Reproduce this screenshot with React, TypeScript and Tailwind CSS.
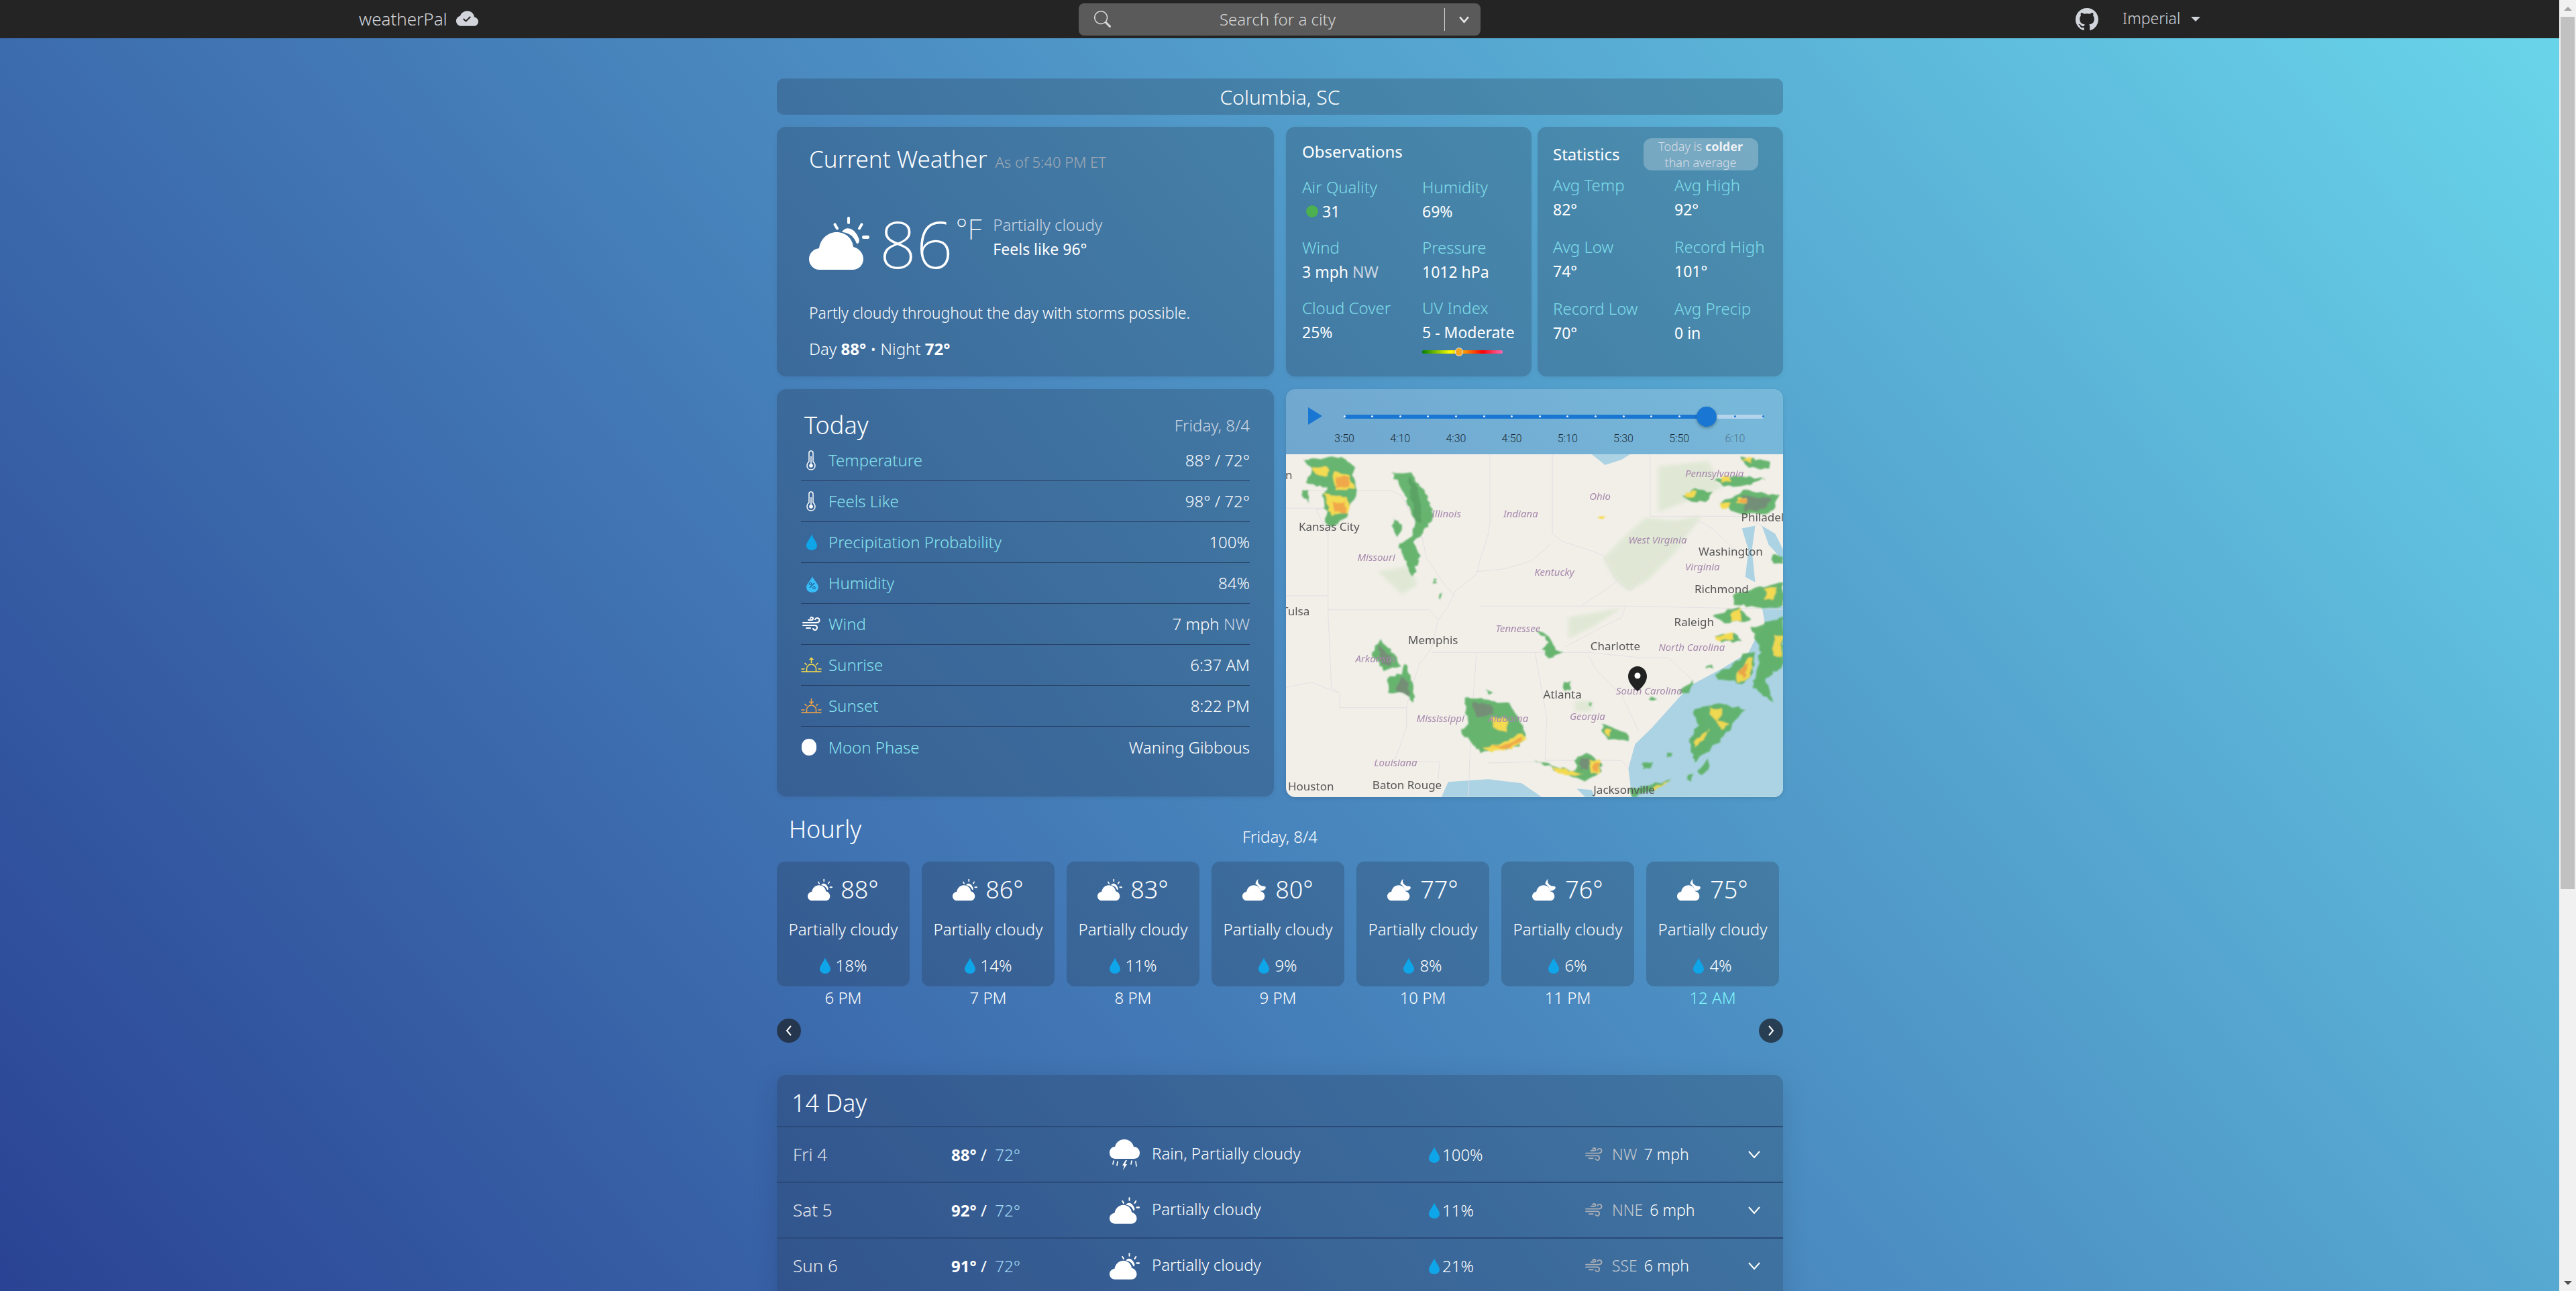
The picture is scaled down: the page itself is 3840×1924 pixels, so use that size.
import React from "react";
import { BsCloudCheckFill, BsGithub, BsSearch } from "react-icons/bs";

const CloudSun = ({ className }: { className?: string }) => (
  <svg viewBox="0 0 90 79" className={className} fill="#fff">
    <path d="M16 79C6 79 0 71 0 63C0 55 6 48 15 47C17 33 28 23 41 23C55 23 65 33 66 45C75 47 81 55 81 63C81 72 74 79 65 79Z" />
    <path d="M49 23C54 13 68 16 74 32C76 37 74 41 71 40C67 29 60 24 49 23Z" />
    <rect x="57" y="0" width="4" height="11" rx="2" />
    <rect x="38" y="9" width="4" height="11" rx="2" transform="rotate(-30 40 14)" />
    <rect x="75" y="9" width="4" height="11" rx="2" transform="rotate(30 77 14)" />
    <rect x="79" y="28" width="11" height="5" rx="2.5" />
  </svg>
);
const CloudMoon = ({ className }: { className?: string }) => (
  <svg viewBox="0 0 90 79" className={className} fill="#fff">
    <path d="M16 79C6 79 0 71 0 63C0 55 6 48 15 47C17 33 28 23 41 23C55 23 65 33 66 45C75 47 81 55 81 63C81 72 74 79 65 79Z" />
    <path d="M58 0C52 12 60 26 80 27C84 27 86 32 84 35C78 42 72 44 66 43C62 30 54 22 47 19C49 11 52 4 58 0Z" />
  </svg>
);
const CloudStorm = ({ className }: { className?: string }) => (
  <svg viewBox="0 0 45 46" className={className} fill="#fff">
    <path d="M9 29C3 29 0 25 0 20C0 15 3 11 8 11C10 4 15 0 22 0C29 0 34 4 36 11C41 11 45 15 45 20C45 25 42 29 36 29Z" />
    <path d="M24 31L19 39H22L20 46L26 37H23L26 31Z" />
    <path d="M6 32L5 37M12 33L11 39M33 32L32 37M39 33L40 40" stroke="#fff" strokeWidth="1.6" strokeLinecap="round" />
  </svg>
);
const Drop = ({ className }: { className?: string }) => (
  <svg viewBox="0 0 16 24" className={className} fill="#0ea5e9">
    <path d="M8 0C9 5 16 12 16 17C16 21 12.500 24 8 24C3.500 24 0 21 0 17C0 12 7 5 8 0Z" />
  </svg>
);
const Wind = ({ className, color }: { className?: string; color: string }) => (
  <svg viewBox="0 0 27 22" className={className} fill="none" stroke={color} strokeWidth="2" strokeLinecap="round">
    <path d="M1 9H20C24 9 25.500 7 25.500 5.500C25.500 3.500 24 2 22 2C20.500 2 19.500 3 19 4" />
    <path d="M1 13H19C21.500 13 22 15 22 16.500C22 18.500 20.500 20 19 20C17.500 20 16.500 19 16 18" />
    <path d="M9 5H14C15.500 5 16 4 16 3C16 2 15 1 14 1C13 1 12 1.500 12 2.500" />
    <path d="M6 17H12" />
  </svg>
);
const Thermo = () => (
  <svg viewBox="0 0 14 30" className="w-[14px] h-[30px] ml-[8px]" fill="none" stroke="#fff" strokeWidth="1.500">
    <path d="M4 17V4C4 2 5.500 1 7 1C8.500 1 10 2 10 4V17C12 18.500 13 20 13 23C13 26.500 10.500 29 7 29C3.500 29 1 26.500 1 23C1 20 2 18.500 4 17Z" />
    <circle cx="7" cy="23" r="2.800" fill="#fff" stroke="none" />
    <path d="M7 9V22" />
  </svg>
);
const Humid = () => (
  <svg viewBox="0 0 18 24" className="w-[18px] h-[24px] ml-[8px] mt-[4px]">
    <path d="M9 0C10 4 18 11 18 16C18 21 14 24 9 24C4 24 0 21 0 16C0 11 8 4 9 0Z" fill="#38bdf8" />
    <path d="M5 17L12 10" stroke="#1e5a8f" strokeWidth="1.200" />
    <circle cx="6" cy="11" r="1.800" fill="none" stroke="#1e5a8f" strokeWidth="1" />
    <circle cx="11.500" cy="17" r="1.800" fill="none" stroke="#1e5a8f" strokeWidth="1" />
  </svg>
);
const Sun = ({ color, down }: { color: string; down?: boolean }) => (
  <svg viewBox="0 0 30 22" className="w-[31px] h-[22px]" fill="none" stroke={color} strokeWidth="1.500">
    <path d="M0 21H30M0 17H5M25 17H30" />
    <path d="M8 17C8 13 11 10 15 10C19 10 22 13 22 17V21M8 17V21" />
    <path d="M5 8L8 11M25 8L22 11" />
    {down ? <path d="M15 0V7M12 4.500L15 7.500L18 4.500" /> : <path d="M15 8V1M12 3.500L15 0.500L18 3.500" />}
  </svg>
);

const hours = [
  ["88°", "18%", "6 PM", 0],
  ["86°", "14%", "7 PM", 0],
  ["83°", "11%", "8 PM", 0],
  ["80°", "9%", "9 PM", 1],
  ["77°", "8%", "10 PM", 1],
  ["76°", "6%", "11 PM", 1],
  ["75°", "4%", "12 AM", 1],
] as const;

const days = [
  ["Fri 4", "88°", "72°", "Rain, Partially cloudy", "100%", "NW", "7 mph", true],
  ["Sat 5", "92°", "72°", "Partially cloudy", "11%", "NNE", "6 mph", false],
  ["Sun 6", "91°", "72°", "Partially cloudy", "21%", "SSE", "6 mph", false],
] as const;

const todayRows: [React.ReactNode, string, React.ReactNode][] = [
  [<Thermo />, "Temperature", "88° / 72°"],
  [<Thermo />, "Feels Like", "98° / 72°"],
  [<Drop className="w-[16px] h-[24px] ml-[8px]" />, "Precipitation Probability", "100%"],
  [<Humid />, "Humidity", "84%"],
  [<Wind className="w-[27px] h-[22px] ml-[2px]" color="#fff" />, "Wind", <>7 mph <span className="text-[#cbd5e1]">NW</span></>],
  [<Sun color="#fde047" />, "Sunrise", "6:37 AM"],
  [<Sun color="#f5a742" down />, "Sunset", "8:22 PM"],
  [<span className="block w-[22px] h-[25px] ml-px rounded-full bg-white" />, "Moon Phase", "Waning Gibbous"],
];

const Stat = ({ label, children, className }: { label: string; children: React.ReactNode; className?: string }) => (
  <div className={className}>
    <div className="text-[#7fdde9] text-[24px] font-light leading-[30px]">{label}</div>
    <div className="text-white text-[23px] leading-[30px] mt-[6px] whitespace-nowrap">{children}</div>
  </div>
);

function pts(p: number[]) {
  let s = "";
  const n = p.length / 2;
  for (let i = 0; i < n; i++) {
    const x0 = p[i * 2], y0 = p[i * 2 + 1];
    const x1 = p[((i + 1) % n) * 2], y1 = p[((i + 1) % n) * 2 + 1];
    const steps = Math.max(2, Math.round(Math.hypot(x1 - x0, y1 - y0) / 12));
    for (let k = 0; k < steps; k++) {
      const t = k / steps;
      const seed = Math.sin((x0 + k * 13.7) * 12.9898 + (y0 + k * 7.1) * 78.233) * 43758.5453;
      const r = seed - Math.floor(seed);
      const seed2 = Math.sin((x0 + k * 5.3) * 39.346 + (y0 + k * 11.9) * 11.135) * 24634.6345;
      const r2 = seed2 - Math.floor(seed2);
      s += `${(x0 + (x1 - x0) * t + (r - 0.5) * 10).toFixed(1)},${(y0 + (y1 - y0) * t + (r2 - 0.5) * 10).toFixed(1)} `;
    }
  }
  return s;
}

const greens: number[][] = [
  [85,285,150,280,200,275,240,310,232,345,250,405,225,450,215,500,170,535,150,520,155,480,140,420,160,390,95,375,110,320],
  [85,395,100,395,100,445,85,425],
  [350,330,405,335,450,400,478,490,440,560,420,590,435,640,415,720,400,690,385,640,372,600,410,570,420,520,390,420],
  [355,495,380,530,370,570,355,540],
  [315,955,360,1010,375,1050,330,1065,290,1010],
  [390,1040,410,1100,420,1185,380,1150,345,1150,338,1095,380,1080],
  [780,915,815,935,845,990,862,1000,820,1020,800,985,825,960],
  [570,1165,650,1180,705,1190,730,1250,757,1310,730,1350,620,1370,590,1340,555,1290,580,1260,570,1200],
  [630,1130,650,1150,640,1160],
  [780,1400,830,1420,900,1440,905,1385,950,1375,980,1420,975,1450,930,1475,850,1440],
  [985,1265,1020,1280,1062,1310,1060,1325,1000,1320,980,1295],
  [940,1185,950,1185,950,1200],
  [1370,790,1440,760,1524,740,1524,830,1440,832,1380,820],
  [1310,862,1390,830,1432,880,1350,892],
  [1320,940,1380,925,1400,960,1340,962],
  [1430,910,1524,870,1524,1050,1470,1100,1490,1180,1430,1130,1455,1000],
  [1320,1080,1360,1060,1410,1000,1440,1000,1432,1080,1400,1120,1370,1100,1330,1105],
  [1250,1220,1320,1190,1410,1210,1360,1290,1340,1320,1260,1410,1240,1330,1270,1270],
  [1265,1450,1300,1395,1300,1430,1285,1455],
  [1060,1510,1190,1470,1130,1515,1070,1536],
  [1100,1415,1135,1405,1130,1430,1105,1435],
  [1395,275,1480,290,1480,322,1420,312],
  [1320,362,1380,345,1470,355,1400,385,1340,382],
  [1225,420,1260,395,1312,405,1290,440,1240,442],
  [1330,450,1410,395,1512,420,1490,480,1400,490],
  [1490,640,1524,640,1524,675,1495,670],
  [865,1110,885,1110,885,1140,865,1140],
  [475,728,483,728,483,745,475,745],
  [490,783,500,783,500,805,490,805],
  [1215,1135,1255,1105,1240,1150,1215,1155],
  [1295,1045,1312,1045,1312,1058,1295,1058],
  [1240,1450,1255,1450,1250,1475,1240,1475],
  [1175,1370,1190,1370,1190,1385,1175,1385],
  [1120,1160,1145,1170,1125,1180],
];
const yellows: number[][] = [
  [175,325,225,345,238,390,180,402],
  [148,412,220,422,222,482,170,495],
  [115,310,160,310,160,345,125,340],
  [650,1240,700,1245,692,1292,660,1285],
  [620,1352,680,1340,740,1300,752,1320,720,1352,650,1368],
  [820,1420,905,1445,930,1450,900,1460,840,1440],
  [945,1400,975,1400,975,1448,945,1445],
  [990,1285,1010,1290,1005,1312,988,1305],
  [1300,1205,1345,1210,1330,1250,1360,1265,1340,1290,1310,1240],
  [1260,1330,1305,1280,1290,1320,1260,1350],
  [1380,1090,1420,1020,1435,1020,1420,1100,1390,1112],
  [1370,845,1398,835,1395,880,1365,885],
  [1495,940,1520,935,1520,1015,1495,1010],
  [1470,760,1505,755,1495,810,1470,800],
  [1320,945,1370,930,1375,950,1335,955],
  [1400,290,1430,275,1430,295],
  [1232,405,1262,402,1255,428,1232,425],
  [1340,345,1362,345,1365,370,1340,368],
  [1385,430,1415,425,1415,448,1385,445],
  [1335,448,1362,448,1360,465,1340,465],
  [1130,1505,1190,1472,1140,1510],
  [970,495,995,495,985,507],
];
const oranges: number[][] = [
  [180,345,220,350,225,385,185,390],
  [175,440,215,445,210,480,180,480],
  [640,1352,700,1340,745,1310,735,1335,690,1358],
  [955,1410,972,1410,970,1440,955,1440],
  [1390,1070,1420,1040,1410,1095],
  [1390,432,1412,430,1412,445,1392,445],
];

const lines = [
  "M645 265V520L640 560L615 660L605 710L540 775L520 830L490 880L470 985L435 1040L410 1130L395 1205V1280L360 1400",
  "M832 265V560L865 590L930 615L985 640L1025 735L990 770L920 825",
  "M1125 265V495H1400L1460 530",
  "M160 465V850L170 1130L195 1150V1205H395",
  "M34 465H160L125 470L160 560M100 400H350L380 420L440 560L455 650L510 750L540 790",
  "M34 790H158M158 842H465L490 880M615 828H1050L1524 840",
  "M605 700L690 690L770 660L830 595",
  "M470 1000H780H940L1100 1020H1180L1250 1100",
  "M605 1000L590 1250L580 1536M780 1000L815 1240L810 1400H1040L1060 1430",
  "M940 1010L960 1060L1040 1160L1090 1290",
  "M1050 830L1040 870L960 920L870 980M1030 740L1070 770L1110 690L1180 620L1270 510L1310 540L1380 620",
  "M295 1405H495L490 1470M34 1130L110 1110L190 1150M640 1410L810 1405",
];

const label = (zx: number, zy: number) => ({ x: (zx - 34) / 2.01, y: (zy - 265) / 2.489 });
const mapLabels: [string, number, number, boolean][] = [
  ["Kansas City", 72, 548, false], ["Philadelphia", 1398, 515, false], ["Washington", 1270, 640, false],
  ["Richmond", 1258, 780, false], ["Raleigh", 1197, 903, false], ["Memphis", 400, 970, false],
  ["Charlotte", 946, 993, false], ["Atlanta", 805, 1172, false], ["Houston", 40, 1512, false],
  ["Baton Rouge", 293, 1507, false], ["Jacksonville", 955, 1525, false], ["Tulsa", 22, 863, false],
  ["Lincoln", -62, 358, false], ["Dallas", -80, 1212, false],
  ["Pennsylvania", 1230, 350, true], ["Ohio", 943, 435, true], ["Illinois", 470, 500, true],
  ["Indiana", 685, 500, true], ["West Virginia", 1060, 595, true], ["Missouri", 248, 660, true],
  ["Virginia", 1230, 695, true], ["Kentucky", 778, 715, true], ["Tennessee", 662, 925, true],
  ["North Carolina", 1150, 995, true], ["Arkansas", 242, 1036, true], ["South Carolina", 1023, 1155, true],
  ["Georgia", 884, 1250, true], ["Mississippi", 425, 1258, true], ["Alabama", 640, 1258, true],
  ["Louisiana", 298, 1423, true], ["Oklahoma", -110, 980, true],
];

const RadarMap = () => (
  <svg viewBox="0 0 741 511" className="block w-[741px] h-[511px] bg-[#f2efe9]">
    <defs>
      <filter id="soft"><feGaussianBlur stdDeviation="2.200" /></filter>
      <filter id="softer"><feGaussianBlur stdDeviation="6" /></filter>
      <filter id="txt"><feGaussianBlur stdDeviation="0.35" /></filter>
    </defs>
    <g transform="scale(0.49751 0.40177) translate(-34 -265)">
      <g fill="#e0e8d5" filter="url(#softer)">
        <path d="M985 650L1040 580L1110 500L1200 510L1280 490L1200 630L1120 730L1060 775L1020 730Z" />
        <path d="M1150 310L1300 290L1340 390L1150 480Z" />
        <path d="M310 700L400 680L430 750L380 785Z" />
        <path d="M880 870L1040 835L960 900L880 950Z" />
        <path d="M900 1180H950V1220H900Z" />
      </g>
      <g fill="#acd3e3">
        <path d="M1524 830L1460 830L1470 900L1440 950L1420 1000L1340 1060L1250 1120L1210 1170L1130 1280L1080 1340L1060 1430L1070 1536H1524Z" />
        <path d="M500 1536L520 1480L640 1470L740 1485L800 1536Z" />
        <path d="M930 1536L905 1505L950 1510L960 1536Z" />
        <path d="M950 265H1065L1040 285L990 305Z" />
        <path d="M1400 540L1440 530L1430 620L1440 740L1410 720L1420 620Z" />
        <path d="M1460 530L1500 560L1524 620V660L1480 600Z" />
      </g>
      <g fill="none" stroke="#e3dce2" strokeWidth="2">
        {lines.map((d, i) => <path key={i} d={d} />)}
      </g>
      <g filter="url(#soft)" opacity="0.92">
        {greens.map((p, i) => <polygon key={i} points={pts(p)} fill="#5bb065" />)}
        <polygon points={pts([310,975,345,1015,350,1050,320,1045])} fill="#6b876d" />
        <polygon points={pts([375,1090,400,1110,405,1160,365,1140])} fill="#6b876d" />
        <polygon points={pts([590,1185,650,1195,660,1230,610,1240])} fill="#6b876d" />
        <polygon points={pts([1400,420,1490,430,1470,470,1410,475])} fill="#6b876d" />
        <polygon points={pts([915,1390,945,1395,945,1430,915,1435])} fill="#6b876d" />
        <polygon points={pts([400,345,430,390,445,520,420,510])} fill="#4f9c5a" />
        {yellows.map((p, i) => <polygon key={i} points={pts(p)} fill="#f4d945" />)}
        {oranges.map((p, i) => <polygon key={i} points={pts(p)} fill="#f0a23c" />)}
      </g>
    </g>
    <g fontFamily="'Noto Sans', sans-serif" filter="url(#txt)">
      {mapLabels.map(([t, zx, zy, it]) => {
        const l = label(zx, zy);
        return (
          <text key={t} x={l.x} y={l.y} fill={it ? "#a688ac" : "#555"} fontStyle={it ? "italic" : "normal"} fontSize={it ? 15 : 17}>{t}</text>
        );
      })}
    </g>
    <path d="M524 316C516 316 510 323 510 331C510 343 524 353 524 353C524 353 538 343 538 331C538 323 532 316 524 316Z" fill="#222" />
    <circle cx="524" cy="330" r="4.500" fill="#fff" />
  </svg>
);

const card = "rounded-[14px] bg-[#1f2a40]/25 shadow-[0_2px_6px_rgba(0,0,0,0.06)]";

export default function App() {
  const ticks = Array.from({ length: 16 }, (_, i) => i);
  const slots = ["3:50", "4:10", "4:30", "4:50", "5:10", "5:30", "5:50", "6:10"];
  return (
    <div className="flex h-[1924px] w-full overflow-hidden font-['Noto_Sans',sans-serif] text-white">
      <div className="flex-1 min-w-0 bg-[linear-gradient(50deg,#2a4394,#4a8ac0_50%,#69d6eb)]">
        <header className="h-[57px] bg-[#242424] relative flex items-center justify-center">
          <div className="absolute left-[535px] top-0 h-[57px] flex items-center gap-[13px] text-[#d1d5db]">
            <span className="text-[26px] font-light">weatherPal</span>
            <BsCloudCheckFill className="w-[33px] h-[33px]" />
          </div>
          <div className="w-[599px] h-[48px] rounded-[8px] bg-[#5a5a5a] flex items-center pl-[23px] pr-[16px] text-[#d6d6d6]">
            <BsSearch className="w-[25px] h-[25px]" />
            <span className="flex-1 text-center text-[24px] font-light">Search for a city</span>
            <span className="w-px h-[34px] bg-[#d6d6d6] mr-[20px]" />
            <svg viewBox="0 0 16 16" className="w-[17px] h-[17px]" fill="none" stroke="#e5e5e5" strokeWidth="2.500"><path d="M2 5L8 12L14 5" /></svg>
          </div>
          <div className="absolute left-[3094px] top-0 h-[57px] flex items-center text-[#d1d5db]">
            <BsGithub className="w-[34px] h-[34px]" />
            <span className="ml-[36px] text-[23px] font-light -mt-[3px]">Imperial</span>
            <span className="ml-[16px] w-0 h-0 border-x-[7px] border-x-transparent border-t-[7px] border-t-[#d1d5db]" />
          </div>
        </header>

        <div className="pl-px">
        <main className="w-[1500px] mx-auto pt-[60px]">
          <div className="h-[54px] rounded-[10px] bg-[#1f2a40]/25 flex items-center justify-center text-[30px] font-light">Columbia, SC</div>

          <div className="mt-[18px] flex">
            <section className={`${card} w-[741px] h-[372px] px-[48px]`}>
              <div className="mt-[22px] flex items-baseline h-[50px]">
                <span className="text-[35px] font-light">Current Weather</span>
                <span className="ml-[12px] text-[22px] font-light text-[#a3aab5]">As of 5:40 PM ET</span>
              </div>
              <div className="mt-[62px] flex items-start h-[80px]">
                <CloudSun className="w-[90px] h-[79px] shrink-0" />
                <span className="ml-[15px] text-[96px] font-extralight leading-[80px]">86</span>
                <span className="ml-[4px] text-[42px] font-extralight leading-[36px]">°F</span>
                <div className="ml-[17px] -mt-[6px] text-[24px] leading-[36px] font-light whitespace-nowrap">
                  <div className="text-[#cbd5e1]">Partially cloudy</div>
                  <div className="font-normal text-[23px]">Feels like 96°</div>
                </div>
              </div>
              <div className="mt-[48px] text-[23px] font-light leading-[30px]">Partly cloudy throughout the day with storms possible.</div>
              <div className="mt-[24px] text-[24px] font-light leading-[30px]">Day <b className="font-bold">88°</b> • Night <b className="font-bold">72°</b></div>
            </section>

            <section className={`${card} h-[372px] ml-[18px] pl-[24px] relative w-[366px]`}>
              <div className="mt-[22px] text-[24px] leading-[30px]">Observations</div>
              <div className="grid grid-cols-[179px_1fr] mt-[23px] gap-y-[24px]">
                <Stat label="Air Quality"><span className="inline-flex items-center"><span className="w-[18px] h-[18px] rounded-full bg-[#4caf50] ml-[6px] mr-[6px]" />31</span></Stat>
                <Stat label="Humidity">69%</Stat>
                <Stat label="Wind">3 mph <span className="text-[#cbd5e1]">NW</span></Stat>
                <Stat label="Pressure">1012 hPa</Stat>
                <Stat label="Cloud Cover">25%</Stat>
                <div className="relative">
                  <Stat label="UV Index">5 - Moderate</Stat>
                  <div className="absolute left-0 top-[78px] w-[120px] h-[5px] rounded-full bg-[linear-gradient(to_right,#008000,#ffff00_35%,#ffa500_50%,#ff0000_75%,#ff69b4)]" />
                  <div className="absolute left-[49px] top-[74px] w-[12px] h-[13px] rounded-full bg-[#f5a623] border border-[#e5e7eb]" />
                </div>
              </div>
            </section>

            <section className={`${card} h-[372px] pl-[23px] ml-[9px] relative w-[366px]`}>
              <div className="flex items-center mt-[17px] h-[48px]">
                <span className="text-[24px]">Statistics</span>
                <div className="ml-[35px] w-[171px] h-[48px] rounded-[12px] bg-white/25 text-center text-[18px] leading-[24px] font-light text-[#d8dee6]">Today is <b className="font-bold text-[#eef1f5]">colder</b><br />than average</div>
              </div>
              <div className="grid grid-cols-[181px_1fr] mt-[7px] gap-y-[26px]">
                <Stat label="Avg Temp">82°</Stat>
                <Stat label="Avg High">92°</Stat>
                <Stat label="Avg Low">74°</Stat>
                <Stat label="Record High">101°</Stat>
                <Stat label="Record Low">70°</Stat>
                <Stat label="Avg Precip">0 in</Stat>
              </div>
            </section>
          </div>

          <div className="mt-[19px] flex gap-[18px]">
            <section className={`${card} w-[741px] h-[607px] px-[36px]`}>
              <div className="flex justify-between items-center h-[76px] pt-[32px]">
                <span className="text-[36px] font-light ml-[5px]">Today</span>
                <span className="text-[24px] font-light text-[#cbd5e1]">Friday, 8/4</span>
              </div>
              {todayRows.map(([icon, l, v], i) => (
                <div key={l} className={`h-[61px] flex items-center ${i < 7 ? "border-b border-[#1f2f4f]/70" : ""}`}>
                  <span className="w-[41px] shrink-0 flex justify-start">{icon}</span>
                  <span className="text-[24px] font-light text-[#86e3ee]">{l}</span>
                  <span className="ml-auto text-[24px] font-light">{v}</span>
                </div>
              ))}
            </section>

            <section className="w-[741px] h-[608px] rounded-[14px] overflow-hidden bg-white/20 shadow-[0_2px_6px_rgba(0,0,0,0.1)]">
              <div className="h-[97px] relative">
                <span className="absolute left-[33px] top-[27px] w-0 h-0 border-y-[13px] border-y-transparent border-l-[21px] border-l-[#1976d2]" />
                <div className="absolute left-[87px] top-[38px] w-[625px] h-[6px] rounded-full bg-[#b4d3ec]" />
                <div className="absolute left-[87px] top-[38px] w-[540px] h-[6px] rounded-l-full bg-[#1976d2]" />
                {ticks.map((t) => (
                  <span key={t} className={`absolute top-[39px] w-[3px] h-[3px] rounded-full ${t < 13 ? "bg-white/90" : "bg-[#1976d2]"}`} style={{ left: 85.500 + t * 41.6 }} />
                ))}
                <span className="absolute left-[612px] top-[26px] w-[30px] h-[30px] rounded-full bg-[#1976d2] shadow-[0_2px_4px_rgba(0,0,0,0.3)]" />
                {slots.map((s, i) => (
                  <span key={s} className={`absolute top-[62px] w-[60px] text-center text-[16px] font-light leading-[24px] font-['Roboto',sans-serif] ${i === 7 ? "text-[#000]/40" : "text-[#000]/80"}`} style={{ left: 57 + i * 83.2 }}>{s}</span>
                ))}
              </div>
              <RadarMap />
            </section>
          </div>

          <div className="relative h-[96px]">
            <span className="absolute left-[18px] top-[20px] text-[36px] font-light leading-[56px]">Hourly</span>
            <span className="absolute left-0 right-0 top-[44px] text-center text-[24px] font-light leading-[30px]">Friday, 8/4</span>
          </div>

          <div className="flex gap-[18px]">
            {hours.map(([t, p, h, night]) => (
              <div key={h} className="w-[198px]">
                <div className="h-[186px] rounded-[12px] bg-[#1f2a40]/25 flex flex-col items-center">
                  <div className="mt-[20px] h-[44px] flex items-center gap-[12px]">
                    {night ? <CloudMoon className="w-[37px] h-[34px]" /> : <CloudSun className="w-[37px] h-[34px]" />}
                    <span className="text-[36px] font-light leading-[44px]">{t}</span>
                  </div>
                  <div className="mt-[22px] text-[24px] font-light leading-[30px]">Partially cloudy</div>
                  <div className="mt-[24px] flex items-center gap-[8px] h-[30px]">
                    <Drop className="w-[16px] h-[24px]" />
                    <span className="text-[24px] font-light">{p}</span>
                  </div>
                </div>
                <div className={`text-center text-[24px] font-light leading-[36px] -mt-px ${h === "12 AM" ? "text-[#7ff4fb]" : ""}`}>{h}</div>
              </div>
            ))}
          </div>

          <div className="flex justify-between mt-[13px]">
            <span className="w-[36px] h-[36px] rounded-full bg-[#1f2937]/80 flex items-center justify-center">
              <svg viewBox="0 0 12 16" className="w-[12px] h-[16px]" fill="none" stroke="#fff" strokeWidth="2"><path d="M9 1L3 8L9 15" /></svg>
            </span>
            <span className="w-[36px] h-[36px] rounded-full bg-[#1f2937]/80 flex items-center justify-center">
              <svg viewBox="0 0 12 16" className="w-[12px] h-[16px]" fill="none" stroke="#fff" strokeWidth="2"><path d="M3 1L9 8L3 15" /></svg>
            </span>
          </div>

          <section className="mt-[48px] rounded-t-[14px] bg-[#1f2a40]/25 shadow-[0_10px_40px_rgba(0,0,0,0.12)] h-[400px]">
            <div className="h-[78px] pl-[22px] pt-[7px] flex items-center text-[36px] font-light border-b-2 border-[#2a4a78]">14 Day</div>
            {days.map(([d, hi, lo, desc, pct, dir, sp, storm]) => (
              <div key={d} className="h-[83px] flex items-center border-b-2 border-[#2a4a78] relative">
                <span className="absolute left-[24px] text-[26px] font-light text-[#e5e7eb]">{d}</span>
                <span className="absolute left-[260px] text-[24px] whitespace-pre"><b className="font-bold">{hi}</b> /  <span className="font-light text-[#a5dcf5]">{lo}</span></span>
                <span className="absolute left-[496px] w-[45px] flex justify-center">
                  {storm ? <CloudStorm className="w-[45px] h-[46px]" /> : <CloudSun className="w-[45px] h-[40px]" />}
                </span>
                <span className="absolute left-[559px] text-[24px] font-light -mt-[4px]">{desc}</span>
                <span className="absolute left-[972px] flex items-center gap-[4px]">
                  <Drop className="w-[16px] h-[24px]" />
                  <span className="text-[24px] font-light">{pct}</span>
                </span>
                <span className="absolute left-[1205px] flex items-center text-[23px]">
                  <Wind className="w-[26px] h-[21px]" color="#a8adb5" />
                  <span className="ml-[14px] font-light text-[#c3c8cf]">{dir}</span>
                  <span className="ml-[10px] font-light">{sp}</span>
                </span>
                <svg viewBox="0 0 18 12" className="absolute left-[1448px] w-[18px] h-[12px]" fill="none" stroke="#fff" strokeWidth="2"><path d="M1 1L9 10L17 1" /></svg>
              </div>
            ))}
          </section>
        </main>
        </div>
      </div>
      <div className="w-[25px] shrink-0 bg-[#f1f1f1] flex flex-col items-center relative">
        <span className="mt-[10px] w-0 h-0 border-x-[6px] border-x-transparent border-b-[6px] border-b-[#a3a3a3]" />
        <div className="mt-[9px] w-[21px] h-[1300px] bg-[#c1c1c1]" />
        <span className="absolute bottom-[9px] w-0 h-0 border-x-[6px] border-x-transparent border-t-[6px] border-t-[#505050]" />
      </div>
    </div>
  );
}
